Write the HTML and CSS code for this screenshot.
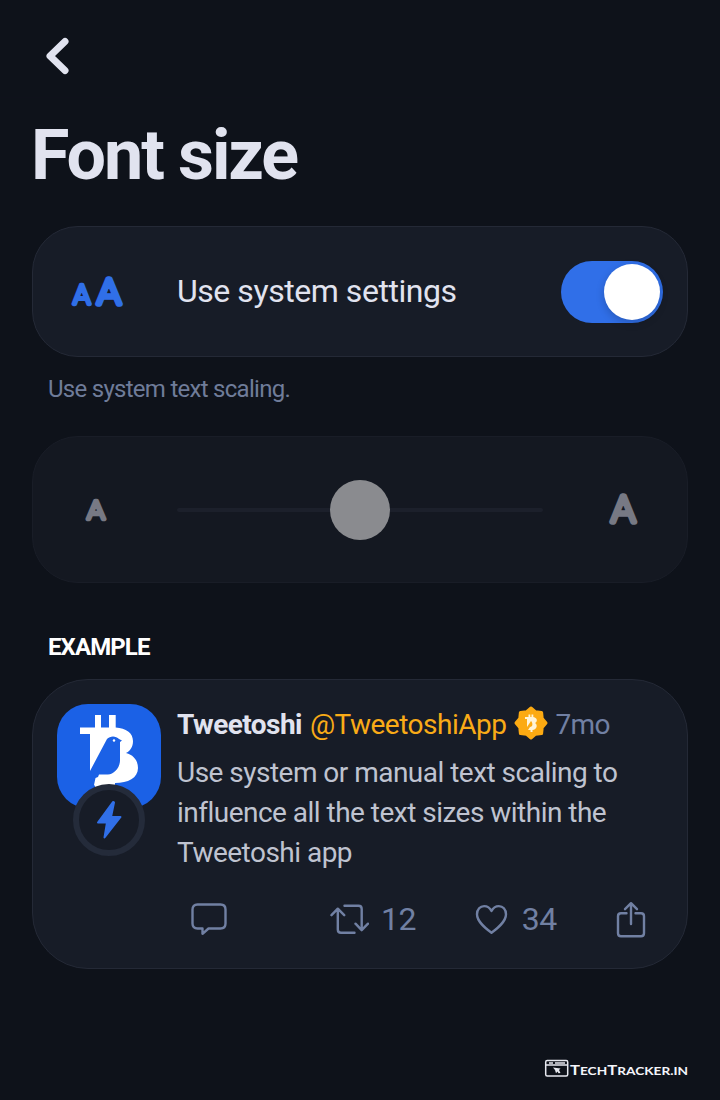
FILE: index.html
```html
<!DOCTYPE html>
<html lang="en">
<head>
<meta charset="utf-8">
<title>Font size</title>
<link rel="stylesheet" href="styles.css">
</head>
<body>
<main class="screen">
  <header class="topbar">
    <button class="back" aria-label="Back"><svg width="30" height="42" viewBox="0 0 30 42"><path d="M23 6.500L8 21L23 35.500"/></svg></button>
  </header>
  <h1 class="title"><span>Font size</span></h1>

  <section class="card system">
    <svg class="aa" width="56" height="44" viewBox="0 0 56 44"><text x="3.600" y="34.300" font-size="25.500" stroke-width="4.400" textLength="16.500" lengthAdjust="spacingAndGlyphs">A</text><text x="27.400" y="34" font-size="35.500" stroke-width="5.600" textLength="23" lengthAdjust="spacingAndGlyphs">A</text></svg>
    <span class="system-label">Use system settings</span>
    <span class="toggle"><span class="knob"></span></span>
  </section>
  <p class="hint">Use system text scaling.</p>

  <section class="card scale">
    <svg class="a-small" width="28" height="40" viewBox="0 0 28 40"><text x="6.400" y="28.800" font-size="26.500" stroke-width="4.700" textLength="17" lengthAdjust="spacingAndGlyphs">A</text></svg>
    <div class="track"><span class="thumb"></span></div>
    <svg class="a-large" width="40" height="52" viewBox="0 0 40 52"><text x="7.500" y="38" font-size="36.500" stroke-width="5.600" textLength="23.500" lengthAdjust="spacingAndGlyphs">A</text></svg>
  </section>

  <h2 class="section-name">EXAMPLE</h2>
  <article class="card tweet">
    <div class="avatar-wrap">
      <svg class="avatar" width="104" height="104" viewBox="0 0 104 104">
        <path class="coin" d="M23 23.500H38V11H44V23.500H52V11H58.700V23.500C69 24 76 29 76 37C76 43 73 47 69 49C77 51 81 57 81 64C81 74 71 79 58 79V90H38V82L37 81L38.500 74L41 73L42 70.500H51C57 70 63.500 64 63 55V38L65 36.500L62 35C59 31.500 53 31.500 50 35L33 67V30H23Z"/>
        <circle class="eye" cx="57" cy="36.500" r="1.200"/>
      </svg>
      <span class="zap"><svg width="32" height="42" viewBox="0 0 32 42"><path d="M20 3L5 23.500H14L11.500 38.500L27.500 18H18L21 3.500Z"/></svg></span>
    </div>
    <div class="content">
      <div class="byline">
        <strong class="name">Tweetoshi</strong>
        <span class="handle">@TweetoshiApp</span>
        <svg class="badge" width="34" height="34" viewBox="0 0 34 34">
          <path class="seal" d="M17 2L21.600 5.800L27.600 6.400L28.200 12.400L32 17L28.200 21.600L27.600 27.600L21.600 28.200L17 32L12.400 28.200L6.400 27.600L5.800 21.600L2 17L5.800 12.400L6.400 6.400L12.400 5.800Z"/>
          <path class="seal-mark" d="M11 11H14.500V8.500H16.300V11H17.500V8.500H19.300V11C24 12 23.500 16 21 17C24 19 23 23.500 18.500 24V26H16.500V24H14L16 21C19 21 19 17 17 15L13 21V13H11Z"/>
        </svg>
        <time class="age">7mo</time>
      </div>
      <p class="message">Use system or manual text scaling to<br>influence all the text sizes within the<br>Tweetoshi app</p>
      <div class="actions">
        <svg class="reply" width="40" height="40" viewBox="0 0 40 40"><path d="M8.500 5.500H31.500Q36.500 5.500 36.500 10.500V24.500Q36.500 29.500 31.500 29.500H19.500L13.500 34.800V29.500H8.500Q3.500 29.500 3.500 24.500V10.500Q3.500 5.500 8.500 5.500Z"/></svg>
        <span class="action retweet"><svg width="40" height="40" viewBox="0 0 40 40"><path d="M2.500 16.200L8.800 9.700L15.200 16.200M8.800 10V30.500Q8.800 33.800 12 33.800H25.500M15.500 6.800H29.500Q32.700 6.800 32.700 10V30.500M26.500 24.700L32.700 31.200L39 24.700"/></svg><span>12</span></span>
        <span class="action like"><svg width="36" height="40" viewBox="0 0 36 40"><path d="M18.500 33.800C12.500 29.300 4 22.800 4 15.300C4 10.100 7.300 7.100 11.100 7.100C14.500 7.100 17.200 9.300 18.500 12C19.800 9.300 22.500 7.100 25.900 7.100C29.700 7.100 33 10.100 33 15.300C33 22.800 24.500 29.300 18.500 33.800Z"/></svg><span>34</span></span>
        <svg class="share" width="36" height="40" viewBox="0 0 36 40"><path d="M13.500 14.200H8Q5 14.200 5 17.200V34.300Q5 37.300 8 37.300H28Q31 37.300 31 34.300V17.200Q31 14.200 28 14.200H22.500M18 25V4.500M12 10.200L18 4.200L24 10.200"/></svg>
      </div>
    </div>
  </article>

  <footer class="credit">
    <svg width="144" height="20" viewBox="0 0 144 20">
      <rect class="win" x="1.700" y="1.500" width="22" height="15.500" rx="1.500"/>
      <path class="win-line" d="M2 6H23M5 3.900H9M11 3.900H21"/>
      <path class="pointer" d="M9 8.500L16.500 9.500L15 11L16.500 14L14.500 14.300L13.500 12.500L12 14.300L11 11Z"/>
      <text x="26" y="15.700" textLength="118" lengthAdjust="spacingAndGlyphs"><tspan class="big">T</tspan>ECH<tspan class="big">T</tspan>RACKER.IN</text>
    </svg>
  </footer>
</main>
</body>
</html>
```
FILE: styles.css
```css
* { box-sizing: border-box; }
body { margin: 0; background: #0e121a; color: #e1e3ef; font-family: Roboto, sans-serif; }
.screen { width: 720px; height: 1100px; padding: 0 32px; display: flex; flex-direction: column; }
svg { display: block; flex: none; }

.topbar { height: 98px; margin: 0 -32px; padding: 35px 0 0 42px; border-bottom: 1px solid #0f111b; }
.back { padding: 0; border: 0; background: none; }
.back path { fill: none; stroke: #e1e3ef; stroke-width: 7; stroke-linecap: round; stroke-linejoin: round; }
.title { margin: 0 0 0 -1px; height: 128px; padding-top: 16px; font-size: 70px; line-height: 82px; font-weight: 700; letter-spacing: -2.1px; }

.card { background: #171c27; border: 1px solid #242936; border-radius: 46px; display: flex; flex: none; }
.system { height: 131px; align-items: center; padding: 0 24px 0 37px; }
.aa text { fill: #306fe8; stroke: #306fe8; stroke-linejoin: round; font-weight: 100; }
.system-label { margin: -2px 0 0 51px; font-size: 32px; letter-spacing: -.45px; }
.toggle { margin-left: auto; width: 102px; height: 62px; border-radius: 31px; background: #306fe8; padding: 3px; display: flex; justify-content: flex-end; }
.knob { width: 56px; height: 56px; border-radius: 50%; background: #fff; box-shadow: 0 3px 8px #0003; }
.hint { margin: 17px 0 0 16px; font-size: 24px; line-height: 30px; height: 62px; color: #6f7c99; letter-spacing: -.72px; }

.scale { height: 147px; background: #141821; border-color: #191d27; align-items: center; padding-left: 48px; }
.scale text { fill: #777984; stroke: #777984; stroke-linejoin: round; font-weight: 100; }
.track { margin-left: 68px; width: 366px; height: 4px; border-radius: 2px; background: #1c202b; display: flex; align-items: center; justify-content: center; }
.thumb { width: 60px; height: 60px; flex: none; border-radius: 50%; background: #8a8b8f; }
.a-large { margin-left: 61px; }
.section-name { margin: 49px 0 0 16px; height: 47px; font-size: 24px; line-height: 30px; font-weight: 700; letter-spacing: -.9px; color: #fff; }

.tweet { height: 290px; padding: 24px; gap: 16px; border-radius: 56px; }
.avatar-wrap { width: 104px; flex: none; position: relative; height: 152px; }
.avatar { border-radius: 31px; background: #1b61e6; }
.coin, .eye { fill: #fff; }
.zap { position: absolute; left: 16px; top: 80px; width: 72px; height: 72px; border: 6px solid #242b3a; border-radius: 50%; background: #171c27; display: grid; place-items: center; }
.zap path { fill: #306fe8; stroke: #306fe8; stroke-width: 2; stroke-linejoin: round; }
.content { flex: 1; min-width: 0; }
.byline { height: 40px; display: flex; align-items: center; font-size: 28px; white-space: nowrap; }
.name { font-weight: 700; letter-spacing: -.55px; }
.handle { color: #f9ab17; margin-left: 8px; letter-spacing: -.5px; }
.badge { margin-left: 8px; margin-top: -2px; }
.seal { fill: #fcaa12; stroke: #fcaa12; stroke-width: 3; stroke-linejoin: round; }
.seal-mark { fill: #fff4d8; }
.age { margin-left: 7px; color: #7180a3; letter-spacing: -.6px; }
.message { margin: 9px 0 0; font-size: 28px; line-height: 40px; color: #bfc3d0; letter-spacing: -.52px; white-space: nowrap; }
.actions { margin-top: 26px; height: 40px; display: flex; align-items: center; color: #7180a3; font-size: 32px; letter-spacing: -.6px; }
.actions path { fill: none; stroke: #7180a3; stroke-width: 2.4; stroke-linejoin: round; stroke-linecap: round; }
.action { display: flex; align-items: center; gap: 12px; }
.reply { margin-left: 12px; }
.retweet { margin-left: 100px; }
.like { margin-left: 57px; gap: 13px; }
.share { margin-left: 56px; }

.credit { margin-top: 90px; display: flex; justify-content: flex-end; }
.win, .win-line { fill: none; stroke: #e6e8ef; stroke-width: 1.5; }
.pointer { fill: #e6e8ef; }
.credit text { fill: #f4f5fa; font-family: Lato, sans-serif; font-weight: 700; font-size: 11.5px; }
.credit .big { font-size: 14px; }
```
